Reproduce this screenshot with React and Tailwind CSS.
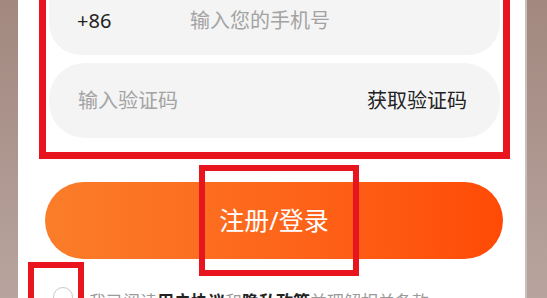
import React from 'react';

const App = () => {
  return (
    <div className="flex h-[298px] w-[547px] overflow-hidden bg-white font-['Noto_Sans','Noto_Sans_CJK_SC',sans-serif]">
      {/* left edge of the photo */}
      <div className="w-[18px] shrink-0 bg-gradient-to-b from-[#a2887f] to-[#b8a49e]" />

      <div className="relative flex-1 bg-white">
        {/* form card with red annotation frame */}
        <div className="ml-[21px] -mt-[30px] w-[471px] border-x-[7px] border-b-[7px] border-[#e8141e] px-[3px] pb-[14px]">
          <div className="flex h-[85px] items-end rounded-[32px] bg-[#f4f4f4] pb-[21px] pl-[28px] text-[20px] leading-[26px]">
            <span className="w-[113px] text-[#222]">+86</span>
            <span className="text-[#a3a3a3]">输入您的手机号</span>
          </div>
          <div className="mt-[8px] flex h-[75px] items-center justify-between rounded-[36px] bg-[#f4f4f4] pl-[29px] pr-[33px] text-[20px] leading-[26px]">
            <span className="text-[#a3a3a3]">输入验证码</span>
            <span className="text-[#222]">获取验证码</span>
          </div>
        </div>

        {/* submit button */}
        <div className="ml-[27px] mt-[23px] flex h-[77px] w-[458px] items-center justify-center rounded-full bg-gradient-to-r from-[#fa7d29] to-[#ff4a05]">
          <span className="text-[25px] leading-none text-white">注册/登录</span>
        </div>

        {/* agreement */}
        <div className="ml-[35px] mt-[28px] flex items-start gap-[16px]">
          <div className="h-[20px] w-[20px] shrink-0 rounded-full border border-[#c9c9c9]" />
          <p className="mt-[5px] text-[17px] leading-[20px] text-[#9a9a9a]">
            我已阅读<b className="font-bold text-[#222]">用户协议</b>和<b className="font-bold text-[#222]">隐私政策</b>并理解相关条款
          </p>
        </div>

        {/* annotation boxes */}
        <div className="absolute left-[181px] top-[165px] h-[111px] w-[160px] border-[6px] border-[#e8141e]" />
        <div className="absolute left-[10px] top-[262px] h-[50px] w-[56px] border-[6px] border-[#e8141e]" />
      </div>

      {/* right edge of the photo */}
      <div className="w-[22px] shrink-0 border-l-2 border-[#cbbdb8] bg-gradient-to-b from-[#a2887f] to-[#b8a49e]" />
    </div>
  );
};

export default App;
